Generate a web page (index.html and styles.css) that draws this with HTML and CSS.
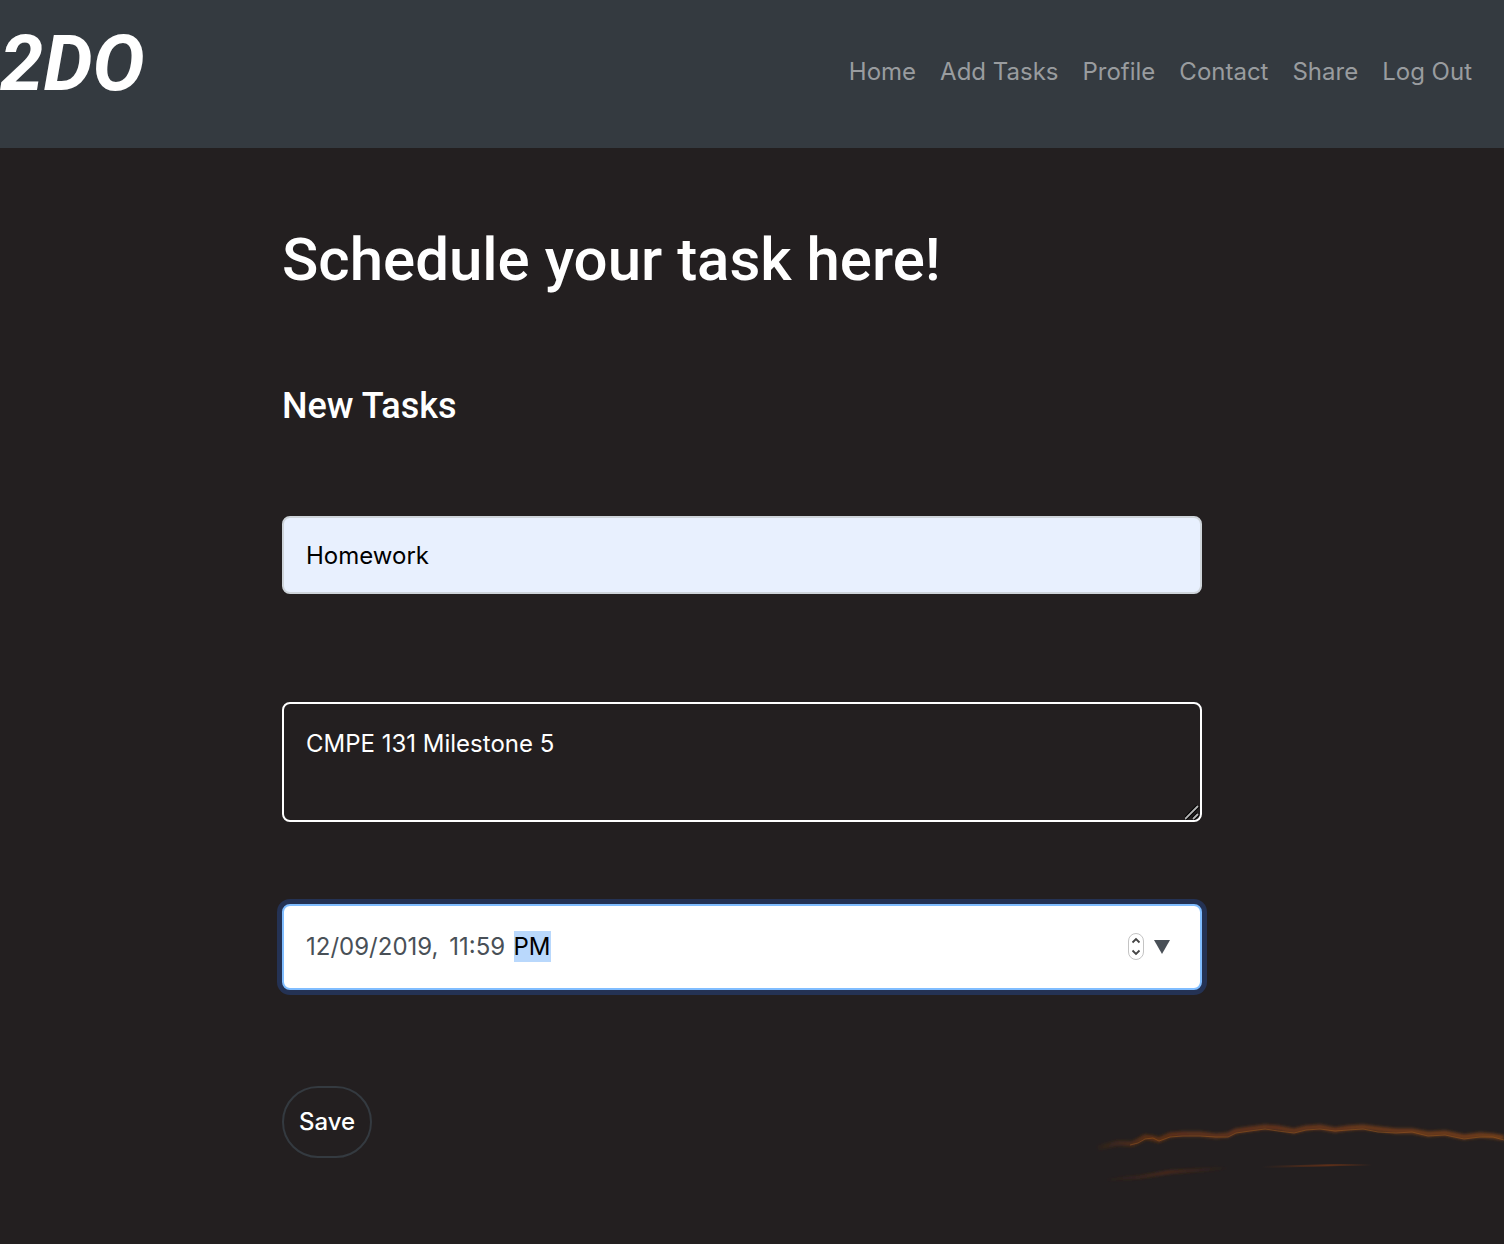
FILE: index.html
```html
<!DOCTYPE html>
<html lang="en">
<head>
<meta charset="utf-8">
<meta name="viewport" content="width=device-width, initial-scale=1">
<title>2DO - Add Tasks</title>
<link rel="stylesheet" href="styles.css">
</head>
<body>
<header class="topbar">
  <a class="brand" href="#">2DO</a>
  <nav class="nav" aria-label="Main">
    <a href="#">Home</a>
    <a href="#">Add Tasks</a>
    <a href="#">Profile</a>
    <a href="#">Contact</a>
    <a href="#">Share</a>
    <a href="#">Log Out</a>
  </nav>
</header>
<main class="page">
  <h1 class="title">Schedule your task here!</h1>
  <h2 class="subtitle">New Tasks</h2>
  <form class="task-form">
    <input class="field field-name" type="text" aria-label="Task name" value="Homework">
    <textarea class="field field-notes" aria-label="Description">CMPE 131 Milestone 5</textarea>
    <input class="field field-due" type="datetime-local" aria-label="Due date" value="2019-12-09T23:59">
    <button class="save" type="button">Save</button>
  </form>
  <svg class="embers" viewBox="0 0 414 100" aria-hidden="true">
    <defs>
      <filter id="soft" x="-5%" y="-50%" width="110%" height="200%"><feGaussianBlur stdDeviation="1.4"/></filter>
      <linearGradient id="glow" gradientUnits="userSpaceOnUse" x1="0" y1="0" x2="414" y2="0">
        <stop offset="0" stop-color="#6a3414" stop-opacity="0"/>
        <stop offset=".14" stop-color="#6a3414" stop-opacity=".8"/>
        <stop offset="1" stop-color="#7a4019" stop-opacity=".9"/>
      </linearGradient>
      <linearGradient id="faintLeft" gradientUnits="userSpaceOnUse" x1="15" y1="0" x2="138" y2="0">
        <stop offset="0" stop-color="#5a2c18" stop-opacity="0"/>
        <stop offset=".5" stop-color="#5a2c18" stop-opacity=".8"/>
        <stop offset="1" stop-color="#5a2c18" stop-opacity="0"/>
      </linearGradient>
      <linearGradient id="faintRight" gradientUnits="userSpaceOnUse" x1="172" y1="0" x2="282" y2="0">
        <stop offset="0" stop-color="#5e2f18" stop-opacity="0"/>
        <stop offset=".6" stop-color="#5e2f18"/>
        <stop offset="1" stop-color="#5e2f18" stop-opacity="0"/>
      </linearGradient>
    </defs>
    <g fill="none" stroke-linejoin="round">
      <path filter="url(#soft)" stroke="url(#glow)" stroke-width="5" d="M8 48L28 43L42 44L48 41L55 37L62 38L69 40L80 35L93 34L110 34L126 36L138 35L146 31L160 29L175 27L188 28L204 31L216 28L230 27L245 30L258 28L273 27L288 29L306 31L322 31L338 34L355 33L374 37L390 35L403 36L414 38"/>
      <path stroke="#a8611f" stroke-opacity=".45" stroke-width="1" d="M40 45L48 43L55 39L63 38L69 41L80 37L93 36L110 36L126 37L138 37L146 33L160 31L175 29L188 31L204 33L216 30L230 29L245 31L258 30L273 29L288 32L306 33L322 32L338 36L355 35L374 39L390 37L403 37L414 40"/>
      <path filter="url(#soft)" stroke="url(#faintLeft)" stroke-width="3" d="M15 80L50 77L80 72L110 70L138 68"/>
      <path stroke="url(#faintRight)" stroke-width="2" d="M172 67L210 66L250 65L282 65"/>
    </g>
  </svg>
</main>
</body>
</html>
```
FILE: styles.css
```css
* { box-sizing: border-box; }

body {
  margin: 0;
  min-height: 100vh;
  display: flex;
  flex-direction: column;
  background: #231f20;
  color: #fff;
  font-family: Inter, "Liberation Sans", sans-serif;
  font-size: 24px;
  line-height: 36px;
}

.topbar {
  display: flex;
  justify-content: space-between;
  align-items: flex-start;
  height: 148px;
  padding-right: 32px;
  background: #343a40;
}

.brand {
  padding-top: 14px;
  color: #fff;
  font-family: Roboto, sans-serif;
  font-size: 78px;
  font-style: italic;
  font-weight: 700;
  line-height: 100px;
  text-decoration: none;
}

.nav {
  display: flex;
  gap: 24px;
  padding-top: 54px;
}

.nav a {
  color: #999c9f;
  text-decoration: none;
}

.page {
  position: relative;
  flex: 1;
  padding: 76px 302px 86px 282px;
}

.title {
  margin: 0;
  font-family: Roboto, sans-serif;
  font-size: 60px;
  font-weight: 500;
  line-height: 72px;
}

.subtitle {
  margin: 88px 0;
  font-family: Roboto, sans-serif;
  font-size: 36px;
  font-weight: 500;
  line-height: 44px;
}

.task-form {
  display: flex;
  flex-direction: column;
  align-items: flex-start;
}

.field {
  width: 100%;
  padding: 20px 22px;
  border: 2px solid #fff;
  border-radius: 8px;
  font: inherit;
}

.field-name {
  height: 78px;
  margin-bottom: 108px;
  border-color: #ced4da;
  background: #e8f0fe;
  color: #000;
}

.field-notes {
  height: 120px;
  margin-bottom: 82px;
  padding-top: 22px;
  background: transparent;
  color: #fff;
  resize: both;
}

.field-notes::-webkit-resizer {
  background: url("data:image/svg+xml,%3Csvg xmlns='http://www.w3.org/2000/svg' width='15' height='15' viewBox='0 0 15 15'%3E%3Cpath d='M0 14L13 1M8 14L13 9' stroke='%23000' stroke-width='4'/%3E%3Cpath d='M0 14L13 1M8 14L13 9' stroke='%23b5b5b5' stroke-width='1.800'/%3E%3C/svg%3E") right bottom no-repeat;
}

.field-due {
  height: 86px;
  margin-bottom: 96px;
  border-color: #80bdff;
  background: #fff;
  color: #495057;
  box-shadow: 0 0 0 5px #243254;
}

.field-due::-webkit-datetime-edit-fields-wrapper,
.field-due::-webkit-datetime-edit,
.field-due::-webkit-datetime-edit-month-field,
.field-due::-webkit-datetime-edit-day-field,
.field-due::-webkit-datetime-edit-year-field,
.field-due::-webkit-datetime-edit-minute-field {
  padding: 0;
}

.field-due::-webkit-datetime-edit-hour-field {
  margin-left: 4px;
  padding: 0;
}

.field-due::-webkit-datetime-edit-ampm-field {
  margin-left: 4px;
  padding: 1px 0;
  background: #b9d8fc;
  color: #000;
}

.field-due::-webkit-calendar-picker-indicator {
  width: 46px;
  height: 32px;
  margin: 0 6px 0 0;
  padding: 0;
  opacity: 1;
  background: url("data:image/svg+xml,%3Csvg xmlns='http://www.w3.org/2000/svg' width='46' height='32' viewBox='0 0 46 32'%3E%3Crect x='2.5' y='2.5' width='15' height='26' rx='7.5' fill='%23fff' stroke='%23c4c4c4'/%3E%3Cpath d='M6.500 11.500l3.500-3.500 3.500 3.500M6.500 19.500l3.500 3.500 3.500-3.500' fill='none' stroke='%23444' stroke-width='1.800'/%3E%3Cpath d='M28 9h16l-8 14z' fill='%23495057'/%3E%3C/svg%3E") center / 46px 32px no-repeat;
}

.save {
  width: 90px;
  height: 72px;
  padding: 0;
  border: 2px solid #343a40;
  border-radius: 36px;
  background: transparent;
  color: #fff;
  font: inherit;
  font-weight: 500;
}

/* Glowing streaks that belong to the page backdrop. */
.embers {
  position: absolute;
  right: 0;
  bottom: 44px;
  width: 414px;
  height: 100px;
  pointer-events: none;
}
```
